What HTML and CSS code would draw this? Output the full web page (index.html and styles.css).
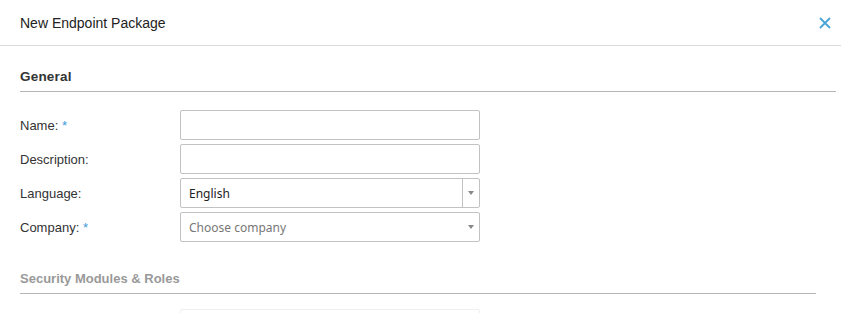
FILE: index.html
```html
<!DOCTYPE html>
<html lang="en">

<head>
    <meta charset="UTF-8">
    <meta name="viewport" content="width=device-width, initial-scale=1.0">
    <title>New Endpoint Package</title>
    <link rel="stylesheet" href="styles.css">
</head>

<body>
    <div class="header">
        <span class="title">New Endpoint Package</span>
        <button class="close" aria-label="Close">
            <svg width="12" height="12" viewBox="0 0 12 12">
                <path d="M1 1 L11 11 M11 1 L1 11" stroke="#4aa3d8" stroke-width="1.8" fill="none" />
            </svg>
        </button>
    </div>

    <div class="content">
        <div class="section general">
            <h2>General</h2>
            <div class="rows">
                <div class="row">
                    <label>Name: <span class="req">*</span></label>
                    <div class="field"></div>
                </div>
                <div class="row">
                    <label>Description:</label>
                    <div class="field"></div>
                </div>
                <div class="row">
                    <label>Language:</label>
                    <div class="field select split">
                        <span class="value">English</span>
                        <span class="arrow"></span>
                    </div>
                </div>
                <div class="row">
                    <label>Company: <span class="req">*</span></label>
                    <div class="field select">
                        <span class="value placeholder">Choose company</span>
                        <span class="arrow"></span>
                    </div>
                </div>
            </div>
        </div>

        <div class="section security">
            <h2>Security Modules &amp; Roles</h2>
            <div class="rows">
                <div class="row">
                    <label></label>
                    <div class="field faint"></div>
                </div>
            </div>
        </div>
    </div>
</body>

</html>
```

FILE: styles.css
```css
body {
    margin: 0;
    background-color: white;
    color: #222;
    font-family: "Liberation Sans", Arial, sans-serif;
    overflow: hidden;
}

.header {
    height: 45px;
    border-bottom: 1px solid #d9d9d9;
    display: flex;
    align-items: center;
    justify-content: space-between;
    padding: 0 10px 0 20px;
}

.title {
    font-size: 14px;
    color: #222;
}

.close {
    border: none;
    background: none;
    padding: 0;
    width: 12px;
    height: 12px;
    display: flex;
    cursor: pointer;
}

.content {
    padding-left: 20px;
}

.section h2 {
    margin: 0;
    font-size: 13px;
    line-height: 16px;
    font-weight: bold;
    padding-bottom: 6px;
    border-bottom: 1px solid #b5b5b5;
}

.general {
    margin-top: 23px;
    margin-right: 5px;
}

.general h2 {
    color: #333;
    font-size: 13.5px;
    letter-spacing: 0.2px;
}

.security {
    margin-top: 29px;
    margin-right: 25px;
}

.security h2 {
    color: #999;
}

.rows {
    margin-top: 18px;
    display: flex;
    flex-direction: column;
    gap: 4px;
}

.security .rows {
    margin-top: 15px;
}

.row {
    display: flex;
    align-items: center;
    height: 30px;
}

.row label {
    width: 160px;
    font-size: 13px;
    color: #333;
}

.req {
    color: #3a9ad9;
}

.field {
    box-sizing: border-box;
    width: 300px;
    height: 30px;
    border: 1px solid #c2c2c2;
    border-radius: 2px;
    display: flex;
    align-items: center;
    font-family: "Noto Sans", Tahoma, sans-serif;
    font-size: 12px;
    color: #222;
}

.value {
    flex: 1;
    padding-left: 8px;
}

.placeholder {
    color: #777;
}

.arrow {
    width: 16px;
    height: 100%;
    display: flex;
    align-items: center;
    justify-content: center;
}

.arrow::after {
    content: "";
    border-left: 3px solid transparent;
    border-right: 3px solid transparent;
    border-top: 4px solid #888;
}

.split .arrow {
    border-left: 1px solid #c2c2c2;
}

.faint {
    border-color: #efefef;
}
```
